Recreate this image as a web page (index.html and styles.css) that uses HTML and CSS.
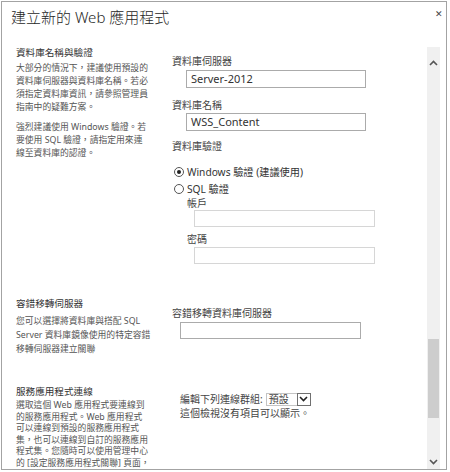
FILE: index.html
```html
<!DOCTYPE html>
<html lang="zh-Hant">
<head>
  <meta charset="UTF-8" />
  <title>建立新的 Web 應用程式</title>
  <link rel="stylesheet" href="styles.css">
</head>
<body>
  <div class="dialog">
    <div class="title-bar">
      <h1 class="title">建立新的 Web 應用程式</h1>
      <span class="close">&#x2715;</span>
    </div>

    <div class="body">
      <div class="content">

        <!-- 資料庫 -->
        <div class="section section-db">
          <div class="info">
            <h2 class="heading">資料庫名稱與驗證</h2>
            <p class="desc">大部分的情況下，建議使用預設的<br>資料庫伺服器與資料庫名稱。若必<br>須指定資料庫資訊，請參照管理員<br>指南中的疑難方案。</p>
            <p class="desc desc-next">強烈建議使用 Windows 驗證。若<br>要使用 SQL 驗證，請指定用來連<br>線至資料庫的認證。</p>
          </div>
          <div class="fields">
            <div class="label">資料庫伺服器</div>
            <div class="textbox tb-main">Server-2012</div>
            <div class="label label-gap">資料庫名稱</div>
            <div class="textbox tb-main tb-second">WSS_Content</div>
            <div class="label label-auth">資料庫驗證</div>
            <div class="radios">
              <div class="radio-row"><span class="radio checked"></span>Windows 驗證 (建議使用)</div>
              <div class="radio-row"><span class="radio"></span>SQL 驗證</div>
            </div>
            <div class="sub-label">帳戶</div>
            <div class="textbox tb-sub"></div>
            <div class="sub-label sub-gap">密碼</div>
            <div class="textbox tb-sub tb-pass"></div>
          </div>
        </div>

        <!-- 容錯移轉 -->
        <div class="section section-failover">
          <div class="info">
            <h2 class="heading">容錯移轉伺服器</h2>
            <p class="desc desc-wide">您可以選擇將資料庫與搭配 SQL<br>Server 資料庫鏡像使用的特定容錯<br>移轉伺服器建立關聯</p>
          </div>
          <div class="fields fields-low">
            <div class="label">容錯移轉資料庫伺服器</div>
            <div class="textbox tb-failover"></div>
          </div>
        </div>

        <!-- 服務應用程式 -->
        <div class="section section-svc">
          <div class="info">
            <h2 class="heading">服務應用程式連線</h2>
            <p class="desc desc-tight">選取這個 Web 應用程式要連線到<br>的服務應用程式。Web 應用程式<br>可以連線到預設的服務應用程式<br>集，也可以連線到自訂的服務應用<br>程式集。您隨時可以使用管理中心<br>的 [設定服務應用程式關聯] 頁面，</p>
          </div>
          <div class="fields fields-low">
            <div class="group-row">
              <span>編輯下列連線群組:</span>
              <div class="select">
                <span class="select-value">預設</span>
                <span class="select-arrow">
                  <svg width="9" height="6" viewBox="0 0 9 6"><path d="M1 1 L4.5 4.5 L8 1" fill="none" stroke="#222" stroke-width="1.6"/></svg>
                </span>
              </div>
            </div>
            <div class="empty-note">這個檢視沒有項目可以顯示。</div>
          </div>
        </div>

      </div>

      <div class="scrollbar">
        <div class="sb-up">
          <svg width="9" height="6" viewBox="0 0 9 6"><path d="M1 5 L4.5 1.5 L8 5" fill="none" stroke="#555" stroke-width="1.6"/></svg>
        </div>
        <div class="sb-space sb-top"></div>
        <div class="sb-thumb"></div>
        <div class="sb-space"></div>
        <div class="sb-down">
          <svg width="9" height="6" viewBox="0 0 9 6"><path d="M1 1 L4.5 4.5 L8 1" fill="none" stroke="#555" stroke-width="1.6"/></svg>
        </div>
      </div>
    </div>
  </div>
</body>
</html>
```

FILE: styles.css
```css
body {
  margin: 0;
  padding: 0;
  background: #fff;
  font-family: "Noto Sans", "Noto Sans CJK TC", sans-serif;
  color: #444;
}

.dialog {
  width: 444px;
  height: 467px;
  margin: 1px 0 0 1px;
  border: 1px solid #a3a3a3;
  display: flex;
  flex-direction: column;
  overflow: hidden;
  position: relative;
}

.title-bar {
  height: 44px;
  flex: none;
}

.title {
  margin: 0;
  padding: 5px 0 0 9px;
  font-size: 15px;
  line-height: 20px;
  font-weight: 300;
  color: #262626;
}

.close {
  position: absolute;
  top: 5px;
  right: 3px;
  font-size: 9px;
  line-height: 14px;
  color: #444;
}

.body {
  flex: 1;
  display: flex;
  min-height: 0;
}

.content {
  flex: 1;
  overflow: hidden;
  padding-top: 1px;
}

.section {
  display: grid;
  grid-template-columns: 156px 1fr;
  padding-left: 14px;
}

.section-db {
  height: 243px;
}

.section-failover {
  height: 88px;
}

.heading {
  margin: 0;
  font-size: 9.6px;
  line-height: 12px;
  font-weight: normal;
  color: #333;
  white-space: nowrap;
}

.section-failover .info,
.section-svc .info {
  padding-top: 8px;
}

.desc {
  margin: 3px 0 0;
  font-size: 8.8px;
  line-height: 13px;
  color: #555;
  white-space: nowrap;
}

.desc-next {
  margin-top: 7px;
}

.desc-wide {
  margin-top: 4px;
  line-height: 14px;
}

.desc-tight {
  margin-top: 2px;
  line-height: 11.5px;
}

/* right column */
.fields {
  padding-top: 7px;
  font-size: 10px;
  color: #444;
}

.fields-low {
  padding-top: 17px;
}

.label {
  line-height: 14px;
  white-space: nowrap;
}

.fields-low .label {
  line-height: 12px;
}

.label-gap {
  margin-top: 10px;
}

.label-auth {
  margin-top: 8px;
}

.textbox {
  box-sizing: border-box;
  height: 18px;
  border: 1px solid #ababab;
  background: #fff;
  font-size: 11px;
  line-height: 16px;
  padding-left: 4px;
  color: #333;
}

.tb-main {
  margin: 2px 0 0 14px;
  width: 180px;
}

.tb-second {
  margin-top: 1px;
}

.tb-sub {
  margin: 1px 0 0 22px;
  width: 181px;
  height: 17px;
  border-color: #d6d6d6;
}

.tb-pass {
  margin-top: 2px;
}

.tb-failover {
  margin: 3px 0 0 8px;
  width: 181px;
  height: 17px;
}

.radios {
  margin-top: 10px;
}

.radio-row {
  display: flex;
  align-items: center;
  height: 17px;
  font-size: 10.2px;
  color: #333;
  white-space: nowrap;
}

.radio {
  box-sizing: border-box;
  width: 10px;
  height: 10px;
  margin: 0 3px 0 2px;
  border: 1px solid #555;
  border-radius: 50%;
  display: flex;
  align-items: center;
  justify-content: center;
}

.radio.checked::after {
  content: "";
  width: 4px;
  height: 4px;
  border-radius: 50%;
  background: #222;
}

.sub-label {
  margin-left: 15px;
  line-height: 12px;
}

.sub-gap {
  margin-top: 6px;
}

.group-row {
  display: flex;
  align-items: center;
  height: 14px;
  line-height: 12px;
  margin: -3px 0 0 8px;
  white-space: nowrap;
}

.select {
  display: flex;
  height: 13px;
  margin-left: 3px;
}

.select-value {
  box-sizing: border-box;
  width: 31px;
  border: 1px solid #c4c4c4;
  border-right: none;
  padding-left: 2px;
  line-height: 11px;
}

.select-arrow {
  box-sizing: border-box;
  width: 14px;
  border: 1px solid #707070;
  display: flex;
  align-items: center;
  justify-content: center;
}

.empty-note {
  margin: 1px 0 0 8px;
  line-height: 12px;
  white-space: nowrap;
}

/* scrollbar */
.scrollbar {
  width: 13px;
  margin: 1px 6px 0 0;
  background: #f0f0f0;
  display: flex;
  flex-direction: column;
  align-items: center;
}

.sb-up {
  height: 32px;
  display: flex;
  align-items: center;
  justify-content: center;
}

.sb-space {
  height: 37px;
}

.sb-top {
  height: 260px;
}

.sb-thumb {
  width: 11px;
  height: 79px;
  background: #cdcdcd;
}

.sb-down {
  flex: 1;
  display: flex;
  align-items: center;
  justify-content: center;
}
```
